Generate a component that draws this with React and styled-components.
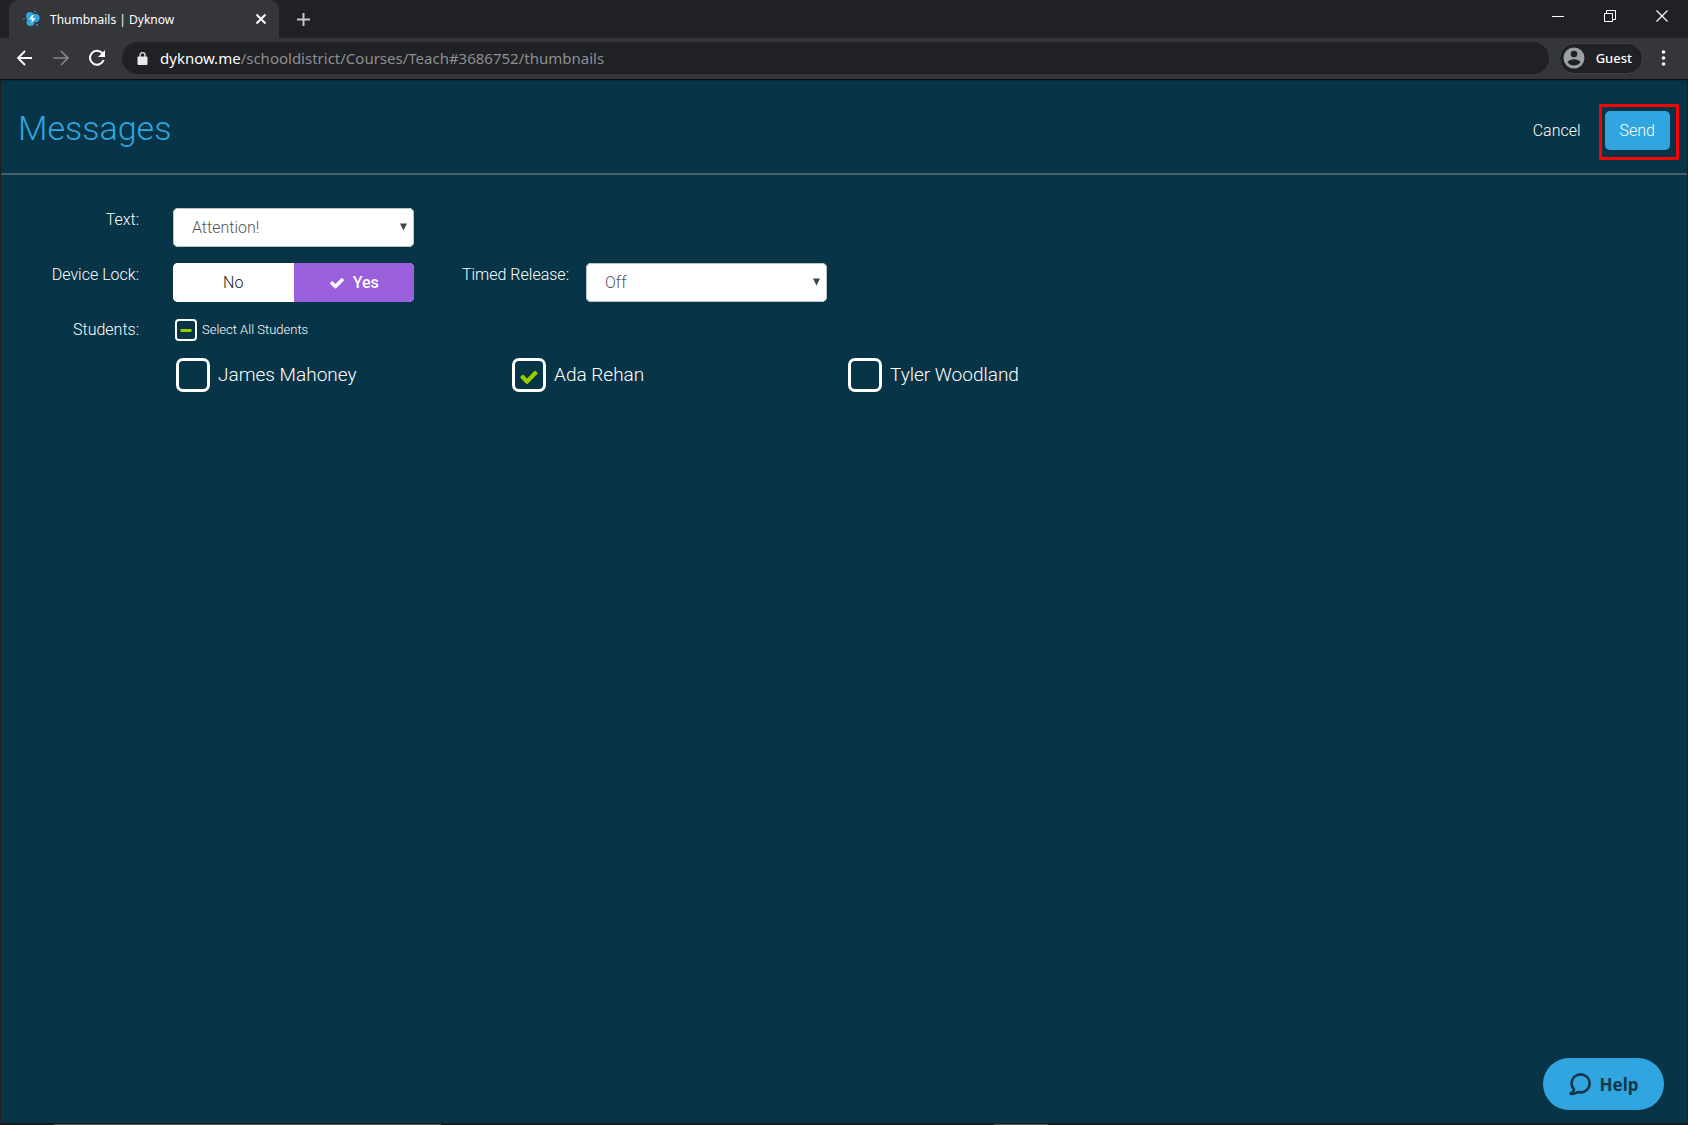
import React, { useState } from "react";
import styled, { createGlobalStyle } from "styled-components";

const GlobalStyle = createGlobalStyle`
  * {
    box-sizing: border-box;
  }
  body {
    margin: 0;
    background: #202124;
    font-family: Roboto, "Liberation Sans", sans-serif;
  }
  button, input, select {
    font-family: inherit;
    margin: 0;
  }
  button {
    border: 0;
    padding: 0;
    background: none;
    color: inherit;
    cursor: pointer;
  }
  svg {
    display: block;
    flex: none;
  }
`;

const Window = styled.div`
  display: flex;
  flex-direction: column;
  min-height: 100vh;
`;

/* browser frame */

const Chrome = styled.div`
  font-family: "Noto Sans", "Open Sans", sans-serif;
  color: #fff;
  border-bottom: 1px solid #0b0d0e;
`;

const TabStrip = styled.div`
  display: flex;
  height: 38px;
  padding-left: 9px;
  background: #202124;
`;

const Tab = styled.div`
  display: flex;
  align-items: center;
  width: 270px;
  padding: 0 12px 0 14px;
  border-radius: 9px 9px 0 0;
  background: #35363a;
  font-size: 12px;
  span {
    flex: 1;
    margin-left: 9px;
    white-space: nowrap;
  }
`;

const NewTab = styled.button`
  margin-left: 17px;
`;

const WindowButtons = styled.div`
  display: flex;
  margin-left: auto;
  height: 32px;
  button {
    display: flex;
    align-items: center;
    justify-content: center;
    width: 52px;
  }
`;

const Toolbar = styled.div`
  display: flex;
  align-items: center;
  height: 41px;
  padding: 0 17px 1px 16px;
  background: #35363a;
`;

const NavButtons = styled.div`
  display: flex;
  gap: 18px;
`;

const AddressBar = styled.div`
  display: flex;
  align-items: center;
  flex: 1;
  height: 32px;
  margin: 0 10px 0 16px;
  padding: 0 15px;
  border-radius: 16px;
  background: #202124;
`;

const Url = styled.span`
  margin-left: 12px;
  font-size: 15px;
  line-height: 20px;
  color: #8d8f92;
  b {
    font-weight: 400;
    color: #fff;
  }
`;

const Profile = styled.button`
  display: flex;
  align-items: center;
  gap: 11px;
  height: 31px;
  margin-right: 13px;
  padding: 0 10px 0 3px;
  border: 1px solid #404145;
  border-radius: 16px;
  background: #202124;
  font-size: 13px;
  font-weight: 500;
`;

/* page */

const Page = styled.main`
  position: relative;
  flex: 1;
  border: 1px solid #1f1e20;
  border-top-color: #0a2a38;
  border-bottom: 0;
  background: #073447;
  color: #fff;
  font-weight: 300;
`;

const Header = styled.header`
  display: flex;
  align-items: center;
  justify-content: space-between;
  height: 94px;
  padding: 0 17px;
  border-bottom: 2px solid #4a5f6b;
`;

const Title = styled.h1`
  margin: 0;
  padding-top: 2px;
  font-size: 34px;
  font-weight: 300;
  line-height: 40px;
  color: #30a5df;
`;

const Actions = styled.div`
  display: flex;
  align-items: center;
  gap: 24px;
  padding-top: 6px;
`;

const ActionButton = styled.button`
  height: 39px;
  padding: ${(props) => (props.$primary ? "0 15px" : "0")};
  border-radius: 5px;
  background: ${(props) => (props.$primary ? "#30a5df" : "none")};
  font-size: 16px;
  font-weight: 300;
`;

const Highlight = styled.div`
  position: relative;
  &::after {
    content: "";
    position: absolute;
    inset: -7px -9px -10px -6px;
    border: 3px solid #f00;
    pointer-events: none;
  }
`;

const Form = styled.form`
  display: flex;
  flex-direction: column;
  gap: 16px;
  padding-top: 33px;
`;

const Row = styled.div`
  display: flex;
  align-items: flex-start;
`;

const Label = styled.label`
  width: ${(props) => props.$width || 138}px;
  margin-right: ${(props) => props.$gap || 34}px;
  text-align: right;
  font-size: 16px;
  line-height: 24px;
`;

const Control = styled.div`
  display: flex;
  position: relative;
  width: 241px;
  height: 39px;
  border-radius: 5px;
  overflow: hidden;
  background: #fff;
`;

const Arrow = styled.svg`
  position: absolute;
  right: 7px;
  top: 15px;
  pointer-events: none;
`;

const Select = styled.select`
  appearance: none;
  width: 100%;
  padding: 0 18px;
  border: 1px solid #b9c2c7;
  border-radius: 5px;
  background: #fff;
  color: #555;
  font-size: 16px;
  font-weight: 300;
`;

const ToggleButton = styled.button`
  display: flex;
  flex: 1;
  align-items: center;
  justify-content: center;
  gap: 8px;
  background: ${(props) => (props.$active ? "#9a5fdd" : "#fff")};
  color: ${(props) => (props.$active ? "#fff" : "#222")};
  font-size: 16px;
  font-weight: ${(props) => (props.$active ? 500 : 300)};
`;

const Students = styled.div`
  flex: 1;
  padding-top: 1px;
`;

const CheckLabel = styled.label`
  display: inline-flex;
  align-items: center;
  gap: ${(props) => (props.$small ? 5 : 8)}px;
  font-size: ${(props) => (props.$small ? 13 : 19)}px;
  line-height: 22px;
`;

const CheckWrap = styled.span`
  display: grid;
  place-items: center;
  > * {
    grid-area: 1 / 1;
  }
  svg {
    pointer-events: none;
  }
`;

const Checkbox = styled.input`
  appearance: none;
  width: ${(props) => (props.$small ? 22 : 34)}px;
  height: ${(props) => (props.$small ? 22 : 34)}px;
  border: ${(props) => (props.$small ? 2 : 3)}px solid #fff;
  border-radius: ${(props) => (props.$small ? 4 : 7)}px;
`;

const SelectAll = styled.div`
  display: flex;
  padding-left: 2px;
`;

const StudentList = styled.div`
  display: grid;
  grid-template-columns: repeat(auto-fill, 336px);
  padding: 17px 0 0 3px;
`;

const HelpButton = styled.button`
  position: absolute;
  right: 23px;
  bottom: 13px;
  display: flex;
  align-items: center;
  justify-content: center;
  gap: 9px;
  width: 121px;
  height: 52px;
  border-radius: 26px;
  background: #30a5df;
  color: #14384a;
  font-family: "Noto Sans", "Open Sans", sans-serif;
  font-size: 17px;
  font-weight: 700;
`;

const Taskbar = styled.div`
  display: flex;
  gap: 553px;
  height: 2px;
  padding: 1px 0 0 54px;
  background: #1c1a1a;
`;

const TaskbarItem = styled.span`
  width: ${(props) => props.$width}px;
  background: #55534f;
`;

function Stroke({ size = 24, width = 2, color = "#fff", d }) {
  return (
    <svg
      width={size}
      height={size}
      viewBox={`0 0 ${size} ${size}`}
      fill="none"
      stroke={color}
      strokeWidth={width}
      aria-hidden="true"
    >
      <path d={d} />
    </svg>
  );
}

function Favicon() {
  return (
    <svg width="18" height="18" viewBox="0 0 18 18" aria-hidden="true">
      <g fill="#30a5df">
        <circle cx="7" cy="6" r="4" />
        <circle cx="12.5" cy="8" r="4.2" />
        <circle cx="7.5" cy="12" r="4" />
        <circle cx="12" cy="1.5" r=".8" />
        <circle cx="1" cy="9" r=".8" />
        <circle cx="14" cy="15" r=".9" />
      </g>
      <path d="M9 5L6 9.5h3L8.5 13l4-4.8h-3L11 5z" fill="#fff" />
    </svg>
  );
}

// Font Awesome style check, drawn on a 1792 grid
function Check({ size, color, top = 0 }) {
  return (
    <svg
      width={size}
      height={size + top}
      viewBox={`0 ${-top * 90} 1792 ${1792 + top * 90}`}
      fill={color}
      aria-hidden="true"
    >
      <path d="M1671 566q0 40-28 68l-724 724-136 136q-28 28-68 28t-68-28l-136-136-362-362q-28-28-28-68t28-68l136-136q28-28 68-28t68 28l294 295 656-657q28-28 68-28t68 28l136 136q28 28 28 68z" />
    </svg>
  );
}

function DropDown({ id, value }) {
  return (
    <Control>
      <Select id={id} defaultValue={value}>
        <option>{value}</option>
      </Select>
      <Arrow width="7" height="8" viewBox="0 0 7 8" aria-hidden="true">
        <path d="M0 0.5h7L3.5 7.5z" fill="#444" />
      </Arrow>
    </Control>
  );
}

function BrowserChrome() {
  return (
    <Chrome>
      <TabStrip>
        <Tab>
          <Favicon />
          <span>Thumbnails | Dyknow</span>
          <button aria-label="Close tab">
            <Stroke size={12} d="M1.5 1.5l9 9M10.5 1.5l-9 9" />
          </button>
        </Tab>
        <NewTab aria-label="New tab">
          <Stroke size={15} color="#c4c6c9" d="M7.5 1v13M1 7.5h13" />
        </NewTab>
        <WindowButtons>
          <button aria-label="Minimize">
            <Stroke size={12} width={1} d="M0 6.5h12" />
          </button>
          <button aria-label="Restore">
            <Stroke size={12} width={1} d="M.5 3.5h8v8h-8zM2.5 3V.5h9v9H9" />
          </button>
          <button aria-label="Close">
            <Stroke size={12} width={1.2} d="M.5.5l11 11M11.5.5l-11 11" />
          </button>
        </WindowButtons>
      </TabStrip>
      <Toolbar>
        <NavButtons>
          <button aria-label="Back">
            <Stroke size={18} width={1.8} d="M16 9H2.5M9 2L2 9l7 7" />
          </button>
          <button aria-label="Forward">
            <Stroke size={18} color="#85878a" width={1.6} d="M1.5 9h14M9 2l7 7-7 7" />
          </button>
          <button aria-label="Reload">
            <svg width="18" height="18" viewBox="0 0 18 18" aria-hidden="true">
              <path d="M14.3 4.2A7 7 0 1 0 15.6 11" fill="none" stroke="#fff" strokeWidth="2" />
              <path d="M17 1v7h-7z" fill="#fff" />
            </svg>
          </button>
        </NavButtons>
        <AddressBar>
          <svg width="11" height="13" viewBox="0 0 11 13" aria-hidden="true">
            <rect x="0.5" y="4.5" width="10" height="8.5" rx="1" fill="#e8e8e8" />
            <path d="M3 5V3.2a2.5 2.5 0 0 1 5 0V5" fill="none" stroke="#e8e8e8" strokeWidth="1.3" />
          </svg>
          <Url>
            <b>dyknow.me</b>/schooldistrict/Courses/Teach#3686752/thumbnails
          </Url>
        </AddressBar>
        <Profile>
          <svg width="22" height="22" viewBox="0 0 22 22" aria-hidden="true">
            <circle cx="11" cy="11" r="10.5" fill="#9aa0a6" />
            <circle cx="11" cy="7" r="3.3" fill="#202124" />
            <path
              d="M4.5 15.2c1.3-2 4-2.9 6.5-2.9s5.2.9 6.5 2.900c-1.4 2-3.8 3.300-6.5 3.300s-5.100-1.300-6.500-3.300z"
              fill="#202124"
            />
          </svg>
          Guest
        </Profile>
        <button aria-label="Menu">
          <svg width="15" height="16" viewBox="0 0 15 16" fill="#fff" aria-hidden="true">
            <circle cx="7.5" cy="2" r="1.8" />
            <circle cx="7.5" cy="8" r="1.8" />
            <circle cx="7.5" cy="14" r="1.8" />
          </svg>
        </button>
      </Toolbar>
    </Chrome>
  );
}

const names = ["James Mahoney", "Ada Rehan", "Tyler Woodland"];

function App() {
  const [lock, setLock] = useState(true);
  const [selected, setSelected] = useState(["Ada Rehan"]);

  const all = selected.length === names.length;
  const some = selected.length > 0 && !all;

  const onStudentHandler = (name) => {
    setSelected(
      selected.includes(name)
        ? selected.filter((item) => item !== name)
        : [...selected, name]
    );
  };

  return (
    <Window>
      <GlobalStyle />
      <BrowserChrome />
      <Page>
        <Header>
          <Title>Messages</Title>
          <Actions>
            <ActionButton type="button">Cancel</ActionButton>
            <Highlight>
              <ActionButton type="submit" form="message" $primary>
                Send
              </ActionButton>
            </Highlight>
          </Actions>
        </Header>
        <Form id="message" onSubmit={(e) => e.preventDefault()}>
          <Row>
            <Label htmlFor="text">Text:</Label>
            <DropDown id="text" value="Attention!" />
          </Row>
          <Row>
            <Label as="span" id="lock">
              Device Lock:
            </Label>
            <Control role="group" aria-labelledby="lock">
              <ToggleButton type="button" $active={!lock} onClick={() => setLock(false)}>
                {!lock && <Check size={16} color="#fff" />}
                No
              </ToggleButton>
              <ToggleButton type="button" $active={lock} onClick={() => setLock(true)}>
                {lock && <Check size={16} color="#fff" />}
                Yes
              </ToggleButton>
            </Control>
            <Label htmlFor="release" $width={155} $gap={17}>
              Timed Release:
            </Label>
            <DropDown id="release" value="Off" />
          </Row>
          <Row>
            <Label as="span" id="students">
              Students:
            </Label>
            <Students role="group" aria-labelledby="students">
              <SelectAll>
                <CheckLabel $small>
                  <CheckWrap>
                    <Checkbox
                      type="checkbox"
                      $small
                      checked={all}
                      onChange={() => setSelected(all ? [] : names)}
                    />
                    {some && <Stroke size={12} width={3} color="#98cb00" d="M.5 6.5h11" />}
                    {all && <Check size={14} color="#98cb00" />}
                  </CheckWrap>
                  Select All Students
                </CheckLabel>
              </SelectAll>
              <StudentList>
                {names.map((name) => (
                  <CheckLabel key={name}>
                    <CheckWrap>
                      <Checkbox
                        type="checkbox"
                        checked={selected.includes(name)}
                        onChange={() => onStudentHandler(name)}
                      />
                      {selected.includes(name) && <Check size={20} top={4} color="#98cb00" />}
                    </CheckWrap>
                    {name}
                  </CheckLabel>
                ))}
              </StudentList>
            </Students>
          </Row>
        </Form>
        <HelpButton type="button">
          <svg
            width="22"
            height="24"
            viewBox="0 0 22 24"
            fill="none"
            stroke="#14384a"
            strokeWidth="2.6"
            strokeLinejoin="round"
            aria-hidden="true"
          >
            <path d="M5 17.5A9 9 0 1 1 9 20c-2 1.500-5 2.200-7.500 1.700C3.500 20.800 4.800 19.500 5 17.500z" />
          </svg>
          Help
        </HelpButton>
      </Page>
      <Taskbar>
        <TaskbarItem $width={387} />
        <TaskbarItem $width={54} />
      </Taskbar>
    </Window>
  );
}

export default App;
